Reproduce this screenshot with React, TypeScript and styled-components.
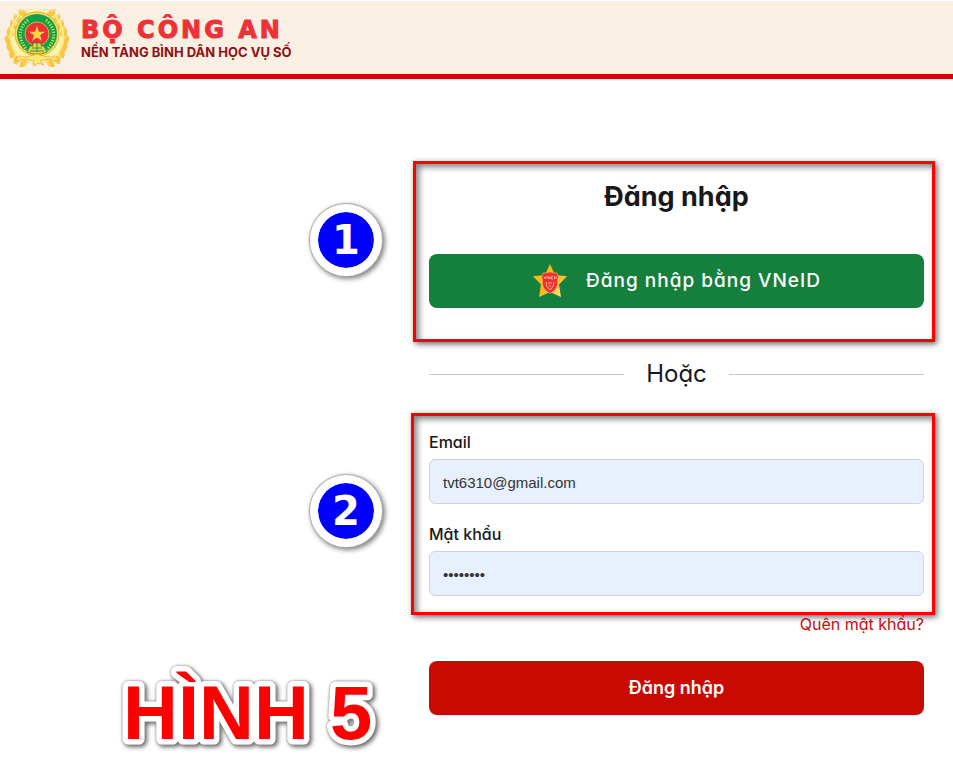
import React from "react";
import styled, { createGlobalStyle, css } from "styled-components";

const GlobalStyle = createGlobalStyle`
  * { box-sizing: border-box; }
  body {
    margin: 0;
    background: #fff;
    color: #18181b;
    font-family: Inter, "Noto Sans", sans-serif;
    font-feature-settings: "cv11";
  }
  button, input { font: inherit; }
`;

const Header = styled.header`
  display: flex;
  align-items: center;
  gap: 11px;
  height: 79px;
  padding: 0 4px;
  background: #f9f0e3;
  border-top: 1px solid #fff;
  border-bottom: 5px solid #d00500;
`;

const Brand = styled.div`
  display: flex;
  flex-direction: column;
  padding-top: 4px;
  white-space: nowrap;
`;

const Ministry = styled.strong`
  color: #ed3237;
  font: 700 24px/24px "DejaVu Sans", sans-serif;
  letter-spacing: 3px;
  -webkit-text-stroke: 1px #ed3237;
`;

const Platform = styled.span`
  color: #8d1015;
  font-size: 13px;
  font-weight: 700;
  line-height: 20px;
  font-feature-settings: normal;
`;

const Main = styled.main`
  display: grid;
  grid-template-columns: minmax(0, 411fr) minmax(0, 524fr);
  padding-right: 18px;
`;

const Guide = styled.aside`
  display: flex;
  flex-direction: column;
  align-items: flex-end;
  padding-top: 125px;
`;

const Step = styled.span`
  display: grid;
  place-items: center;
  width: 72px;
  height: 72px;
  margin: 0 29px 199px 0;
  border: 8px solid #fff;
  border-radius: 50%;
  background: #0000fe;
  background-clip: padding-box;
  color: #fff;
  font: 700 40px/56px "DejaVu Sans", sans-serif;
  box-shadow: 0 0 1px 1px #aaa, 2px 2px 5px 1px rgba(0, 0, 0, 0.5);

  & + & { margin-bottom: 117px; }
`;

const Caption = styled.svg`
  width: 270px;
  height: 90px;
  margin-right: 28px;
  filter: drop-shadow(0 0 1px #888) drop-shadow(2px 2px 2px rgba(0, 0, 0, 0.6));

  text {
    fill: #fe0000;
    stroke: #fff;
    stroke-width: 11px;
    stroke-linejoin: round;
    paint-order: stroke fill;
    font: 700 76px "Liberation Sans", Arial, sans-serif;
  }
`;

const Login = styled.form`
  display: flex;
  flex-direction: column;
  padding-top: 82px;
`;

const framed = css`
  display: flex;
  flex-direction: column;
  border: 3px solid #fe0000;
  box-shadow: 2px 2px 6px rgba(0, 0, 0, 0.6), inset 3px 3px 6px rgba(0, 0, 0, 0.5);
`;

const SsoSection = styled.section`
  ${framed}
  gap: 39px;
  margin-left: 2px;
  padding: 15px 8px 31px 13px;
`;

const CredentialSection = styled.section`
  ${framed}
  gap: 19px;
  padding: 15px 8px 16px 15px;
`;

const Title = styled.h1`
  margin: 0;
  font-size: 27px;
  font-weight: 700;
  line-height: 36px;
  text-align: center;
`;

const Button = styled.button<{ $tone: "green" | "red" }>`
  display: flex;
  align-items: center;
  justify-content: center;
  gap: 18px;
  height: 54px;
  padding-bottom: 2px;
  border: 0;
  border-radius: 8px;
  background: ${(p) => (p.$tone === "green" ? "#15803d" : "#c80a00")};
  color: #fff;
  font-size: ${(p) => (p.$tone === "green" ? 19 : 18)}px;
  font-weight: ${(p) => (p.$tone === "green" ? 500 : 600)};
  letter-spacing: ${(p) => (p.$tone === "green" ? "1px" : "normal")};
  cursor: pointer;
`;

const Divider = styled.div`
  display: flex;
  align-items: center;
  gap: 22px;
  margin: 16px 11px 23px 18px;
  font-size: 24px;
  line-height: 32px;

  &::before, &::after {
    content: "";
    flex: 1;
    height: 1px;
    background: #c9c9c9;
  }
`;

const Field = styled.div`
  display: flex;
  flex-direction: column;
  gap: 6px;
`;

const Label = styled.label`
  font-size: 16px;
  font-weight: 500;
  line-height: 22px;
`;

const Input = styled.input`
  width: 100%;
  height: 45px;
  padding: 2px 13px 0;
  border: 1px solid #d0d3d9;
  border-radius: 6px;
  background: #e8f0fe;
  color: #333;
  font: 15px "Liberation Sans", Arial, sans-serif;
`;

const ForgotLink = styled.a`
  align-self: flex-end;
  margin-right: 11px;
  color: #c20d0d;
  font-size: 16px;
  line-height: 18px;
  text-decoration: none;
`;

const Submit = styled(Button)`
  margin: 28px 11px 0 18px;
`;

const laurel = [
  [17, 4, -42], [12, 9, -28], [8, 15, -15], [5, 22, -5], [3, 29, 8],
  [5, 36, 18], [8, 43, 30], [13, 49, 43], [20, 53, 60],
];

const Wreath = () => (
  <g stroke="#f0bb3a" strokeWidth="0.5">
    {laurel.map(([x, y, r]) => (
      <g key={y} transform={`translate(${x} ${y}) rotate(${r})`}>
        <path d="M0-4Q5-2 4 5Q-2 3 0-4Z" fill="#fde36e" />
        <path d="M-1-2Q-4 2 2 6Q5 1-1-2Z" fill="#fac93a" />
      </g>
    ))}
    <path d="M15 6Q-3 30 18 51" fill="none" stroke="#fff0a0" strokeWidth="1.4" />
  </g>
);

const Emblem = () => (
  <svg width="66" height="58" viewBox="0 0 66 58" aria-hidden="true">
    <path d="M17 3Q-10 29 14 52L29 54L33 57L37 54L52 52Q76 29 49 3Q33-5 17 3Z" fill="#fff3b0" stroke="#d9dce5" />
    <Wreath />
    <g transform="translate(66 0) scale(-1 1)"><Wreath /></g>
    <circle cx="33" cy="25" r="22" fill="#f7df58" stroke="#e9aa2d" />
    <circle cx="33" cy="25" r="20" fill="#12a04c" />
    <g fill="none" stroke="#c9da4d" strokeWidth="3" strokeDasharray="1.3 1.5">
      <path d="M24 11Q9 24 23 41" />
      <path d="M42 11Q57 24 43 41" />
    </g>
    <circle cx="33" cy="25" r="12" fill="#ed3237" stroke="#d8b93b" />
    <path d="M33 17L34.9 22.7H41L36.1 26.2L37.9 32L33 28.5L28.1 32L29.9 26.2L25 22.7H31.1Z" fill="#ffd447" />
    <path d="M23 43L26 37H29V34H37V37H40L43 43L37 45H29Z" fill="#f4cf39" stroke="#168848" strokeWidth="0.7" />
    <path d="M28 39H38M26 42H40M33 34V43" stroke="#168848" strokeWidth="0.8" />
    <path d="M13 48Q24 49 33 45Q42 49 53 48L54 52L45 50L36 52L40 56L34 54L29 57L30 52L21 50L12 52Z" fill="#fee578" stroke="#e8b033" strokeWidth="0.8" />
  </svg>
);

const VneidStar = () => (
  <svg width="36" height="34" viewBox="0 0 36 34" aria-hidden="true">
    <defs>
      <linearGradient id="gold" x1="0" y1="0" x2="1" y2="1">
        <stop offset="0" stopColor="#ffc40d" />
        <stop offset="0.55" stopColor="#f8b719" />
        <stop offset="1" stopColor="#ffec9b" />
      </linearGradient>
    </defs>
    <path d="M18 0L23 11L35 12.3L27 20.5L29 33L18 28L7 33L9 20.5L1 12.3L13 11Z" fill="url(#gold)" />
    <path d="M11 9Q15 9 18 8Q21 9 25 9L26.5 13L25.5 16Q27 25 18 29.5Q9 25 10.5 16L9.5 13Z" fill="#ed3034" stroke="#f7bd55" strokeWidth="0.6" />
    <path d="M12 12.5L13.5 15L14.5 12.5M16 15V12.5L18 15V12.5M21 12.5H19.5V15H21M22.5 12.5V15M24 12.5V15M14 18Q14 23 18 26Q22 23 22 18M16 19H20M17 22H19" fill="none" stroke="#ffd0a0" strokeWidth="0.8" />
  </svg>
);

export default function App() {
  return (
    <>
      <GlobalStyle />
      <Header>
        <Emblem />
        <Brand>
          <Ministry>BỘ CÔNG AN</Ministry>
          <Platform>NỀN TẢNG BÌNH DÂN HỌC VỤ SỐ</Platform>
        </Brand>
      </Header>
      <Main>
        <Guide>
          <Step>1</Step>
          <Step>2</Step>
          <Caption viewBox="0 0 270 90">
            <text x="10" y="75">HÌNH 5</text>
          </Caption>
        </Guide>
        <Login onSubmit={(e) => e.preventDefault()}>
          <SsoSection>
            <Title>Đăng nhập</Title>
            <Button type="button" $tone="green">
              <VneidStar />
              Đăng nhập bằng VNeID
            </Button>
          </SsoSection>
          <Divider>Hoặc</Divider>
          <CredentialSection>
            <Field>
              <Label htmlFor="email">Email</Label>
              <Input id="email" type="email" defaultValue="tvt6310@gmail.com" />
            </Field>
            <Field>
              <Label htmlFor="password">Mật khẩu</Label>
              <Input id="password" type="password" defaultValue="matkhau1" />
            </Field>
          </CredentialSection>
          <ForgotLink href="#quen-mat-khau">Quên mật khẩu?</ForgotLink>
          <Submit type="submit" $tone="red">Đăng nhập</Submit>
        </Login>
      </Main>
    </>
  );
}
